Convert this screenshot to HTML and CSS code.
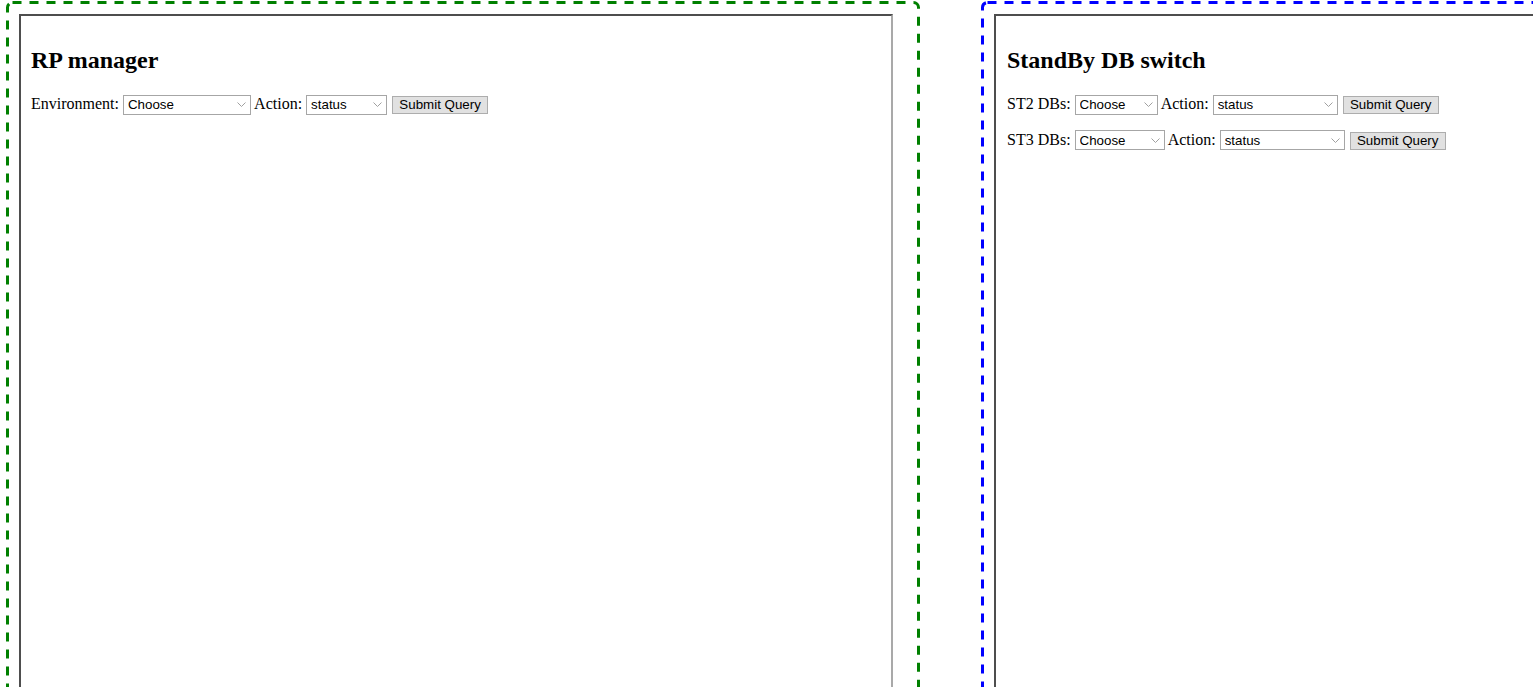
FILE: index.html
```html
<!DOCTYPE html>
<html>
<head>
<meta charset="utf-8">
<title>Managers</title>
<link rel="stylesheet" href="styles.css">
</head>
<body>
<div class="page">
  <div class="panel panel-green">
    <svg class="dash" aria-hidden="true"><rect class="dash-rect" rx="5" ry="5"></rect></svg>
    <div class="frame frame-left">
      <h2 class="title">RP manager</h2>
      <form class="row">
        <label>Environment:</label>
        <select class="sel w-env"><option>Choose</option></select>
        <label>Action:</label>
        <select class="sel w-act"><option>status</option></select>
        <button type="button" class="btn">Submit Query</button>
      </form>
    </div>
  </div>
  <div class="panel panel-blue">
    <svg class="dash" aria-hidden="true"><rect class="dash-rect" rx="5" ry="5"></rect></svg>
    <div class="frame frame-right">
      <h2 class="title">StandBy DB switch</h2>
      <form class="row">
        <label>ST2 DBs:</label>
        <select class="sel w-st2"><option>Choose</option></select>
        <label>Action:</label>
        <select class="sel w-act2"><option>status</option></select>
        <button type="button" class="btn">Submit Query</button>
      </form>
      <form class="row">
        <label>ST3 DBs:</label>
        <select class="sel w-st3"><option>Choose</option></select>
        <label>Action:</label>
        <select class="sel w-act2"><option>status</option></select>
        <button type="button" class="btn">Submit Query</button>
      </form>
    </div>
  </div>
</div>
</body>
</html>
```

FILE: styles.css
```css
html, body {
  margin: 0;
  padding: 0;
  overflow: hidden;
  background: #fff;
}

body {
  font-family: "Liberation Serif", "Times New Roman", serif;
  font-size: 16px;
  color: #000;
}

.page {
  display: flex;
  align-items: flex-start;
  gap: 61px;
  padding: 1px 0 0 6px;
  width: 1700px;
}

.panel {
  position: relative;
  border: 3px solid transparent;
  padding: 10px;
  height: 760px;
  flex: none;
}

.dash {
  position: absolute;
  top: -3px;
  left: -3px;
  width: calc(100% + 6px);
  height: calc(100% + 6px);
  overflow: visible;
  pointer-events: none;
}

.dash-rect {
  x: 1.5px;
  y: 1.5px;
  width: calc(100% - 3px);
  height: calc(100% - 3px);
  fill: none;
  stroke-width: 3;
  stroke-dasharray: 9 8;
}

.panel-green {
  width: 888px;
}

.panel-green .dash-rect {
  stroke: #008000;
}

.panel-blue {
  width: 700px;
}

.panel-blue .dash-rect {
  stroke: #0000ff;
}

.frame {
  border-style: solid;
  border-width: 2px;
  border-color: #4e4e4e #a9a9a9 #a9a9a9 #4e4e4e;
  height: 740px;
  padding: 11px 8px 8px 10px;
  box-sizing: border-box;
}

.frame-left {
  width: 874px;
}

.frame-right {
  width: 700px;
  padding-left: 11px;
}

.title {
  font-size: 24px;
  font-weight: bold;
  margin: 20px 0 20px 0;
  line-height: 27px;
}

.row {
  margin: 0 0 15px 0;
  line-height: 20px;
}

.sel {
  -webkit-appearance: none;
  appearance: none;
  box-sizing: border-box;
  height: 20px;
  border: 1px solid #a6a6a6;
  border-radius: 0;
  background-color: #fff;
  background-image: url("data:image/svg+xml;utf8,<svg xmlns='http://www.w3.org/2000/svg' width='9' height='5' viewBox='0 0 9 5'><path d='M0.5 0.5 L4.5 4.5 L8.5 0.5' fill='none' stroke='%23a0a0a0' stroke-width='1'/></svg>");
  background-repeat: no-repeat;
  background-position: right 4px center;
  font-family: "Liberation Sans", Arial, sans-serif;
  font-size: 13.333px;
  color: #000;
  padding: 0 0 0 4px;
  margin: 0;
  vertical-align: baseline;
}

.w-env { width: 128px; }
.w-act { width: 81px; }
.w-st2 { width: 83px; }
.w-st3 { width: 90px; }
.w-act2 { width: 125px; }

.btn {
  -webkit-appearance: none;
  appearance: none;
  box-sizing: border-box;
  width: 96px;
  height: 18px;
  margin: 0 0 0 1px;
  padding: 0;
  border: 1px solid #adadad;
  border-radius: 0;
  background: #e1e1e1;
  font-family: "Liberation Sans", Arial, sans-serif;
  font-size: 13.333px;
  color: #000;
  line-height: 16px;
  vertical-align: baseline;
}
```
